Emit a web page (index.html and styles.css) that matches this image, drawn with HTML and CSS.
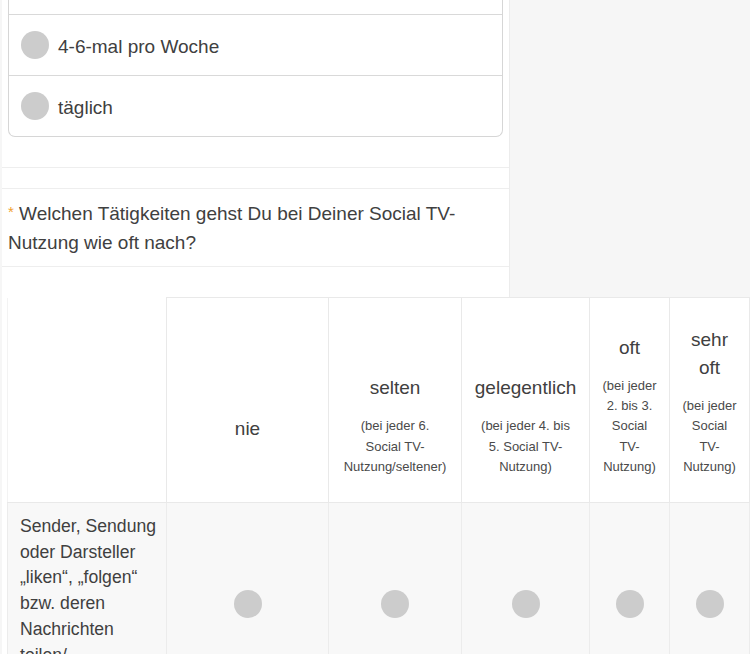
FILE: index.html
```html
<!DOCTYPE html>
<html lang="de">
<head>
<meta charset="utf-8">
<title>Umfrage</title>
<link rel="stylesheet" href="styles.css">
</head>
<body>
<div class="top">
  <div class="panel">
    <div class="card">
      <div class="opt opt-partial"></div>
      <div class="opt"><span class="radio"></span><span class="opt-label">4-6-mal pro Woche</span></div>
      <div class="opt opt-last"><span class="radio"></span><span class="opt-label">täglich</span></div>
    </div>
    <div class="gap-a"></div>
    <div class="gap-b"></div>
    <div class="question"><span class="req">*</span> Welchen Tätigkeiten gehst Du bei Deiner Social TV-<br>Nutzung wie oft nach?</div>
    <div class="pre-table"></div>
  </div>
  <div class="side"></div>
</div>
<div class="table-wrap">
  <table class="matrix">
    <colgroup>
      <col class="c-row"><col class="c-nie"><col class="c-selten"><col class="c-gel"><col class="c-oft"><col class="c-sehr">
    </colgroup>
    <thead>
      <tr class="head-row">
        <th class="corner"></th>
        <th><span class="big">nie</span><span class="small">&nbsp;</span></th>
        <th><span class="big">selten</span><span class="small">(bei jeder 6.<br>Social TV-<br>Nutzung/seltener)</span></th>
        <th><span class="big">gelegentlich</span><span class="small">(bei jeder 4. bis<br>5. Social TV-<br>Nutzung)</span></th>
        <th><span class="big">oft</span><span class="small">(bei jeder<br>2. bis 3.<br>Social<br>TV-<br>Nutzung)</span></th>
        <th><span class="big">sehr<br>oft</span><span class="small">(bei jeder<br>Social<br>TV-<br>Nutzung)</span></th>
      </tr>
    </thead>
    <tbody>
      <tr class="data-row">
        <th class="row-label">Sender, Sendung<br>oder Darsteller<br>„liken“, „folgen“<br>bzw. deren<br>Nachrichten<br>teilen/<br>retweeten</th>
        <td><span class="radio"></span></td>
        <td><span class="radio"></span></td>
        <td><span class="radio"></span></td>
        <td><span class="radio"></span></td>
        <td><span class="radio"></span></td>
      </tr>
    </tbody>
  </table>
</div>
</body>
</html>
```

FILE: styles.css
```css
html, body {
  margin: 0;
  padding: 0;
}
body {
  background: #f6f6f6;
  font-family: "Liberation Sans", Arial, sans-serif;
  color: #404040;
  overflow: hidden;
}
.top {
  display: flex;
  align-items: stretch;
}
.panel {
  margin-left: 2px;
  width: 508px;
  background: #fff;
  border-right: 1px solid #ececec;
  box-sizing: border-box;
}
.side {
  flex: 1;
  background: #f6f6f6;
}
.card {
  margin: 0 6px 0 6px;
  border: 1px solid #d6d6d6;
  border-top: none;
  border-radius: 0 0 7px 7px;
}
.opt {
  height: 60px;
  display: flex;
  align-items: center;
  padding-left: 12px;
  border-bottom: 1px solid #d9d9d9;
}
.opt-partial {
  height: 14px;
}
.opt-last {
  border-bottom: none;
}
.radio {
  display: inline-block;
  width: 28px;
  height: 28px;
  border-radius: 50%;
  background: #cccccc;
  flex: none;
}
.opt-label {
  margin-left: 9px;
  padding-top: 3px;
  font-size: 19px;
}
.gap-a {
  height: 30px;
  border-bottom: 1px solid #eeeeee;
}
.gap-b {
  height: 20px;
  border-bottom: 1px solid #eeeeee;
}
.question {
  padding: 10px 6px 9px 6px;
  font-size: 19px;
  line-height: 29px;
  border-bottom: 1px solid #eeeeee;
}
.req {
  color: #f0a030;
  font-size: 15px;
  vertical-align: top;
  line-height: 26px;
}
.pre-table {
  height: 30px;
}
.table-wrap {
  background: #fff;
  margin-left: 2px;
  padding-left: 5px;
}
.matrix {
  border-collapse: collapse;
  table-layout: fixed;
  width: 743px;
}
.c-row { width: 159px; }
.c-nie { width: 162px; }
.c-selten { width: 133px; }
.c-gel { width: 128px; }
.c-oft { width: 80px; }
.c-sehr { width: 80px; }
.head-row {
  height: 205px;
}
.head-row th {
  border: 1px solid #e9e9e9;
  background: #fff;
  font-weight: normal;
  text-align: center;
  vertical-align: bottom;
  padding: 0 2px 25px;
}
.head-row th.corner {
  border-top: none;
  border-left: 1px solid #f3f3f3;
}
.big {
  display: block;
  font-size: 19px;
  line-height: 28px;
  color: #404040;
}
.small {
  display: block;
  margin-top: 14px;
  font-size: 13px;
  line-height: 20.2px;
  color: #4a4a4a;
}
.data-row {
  height: 202px;
}
.data-row th,
.data-row td {
  background: #f8f8f8;
  border: 1px solid #ececec;
  text-align: center;
  vertical-align: middle;
}
.data-row th.row-label {
  text-align: left;
  vertical-align: top;
  font-weight: normal;
  font-size: 17.6px;
  line-height: 25.7px;
  padding: 11px 4px 11px 12px;
  color: #404040;
}
.data-row td .radio {
  display: block;
  margin: 0 auto;
}
```
